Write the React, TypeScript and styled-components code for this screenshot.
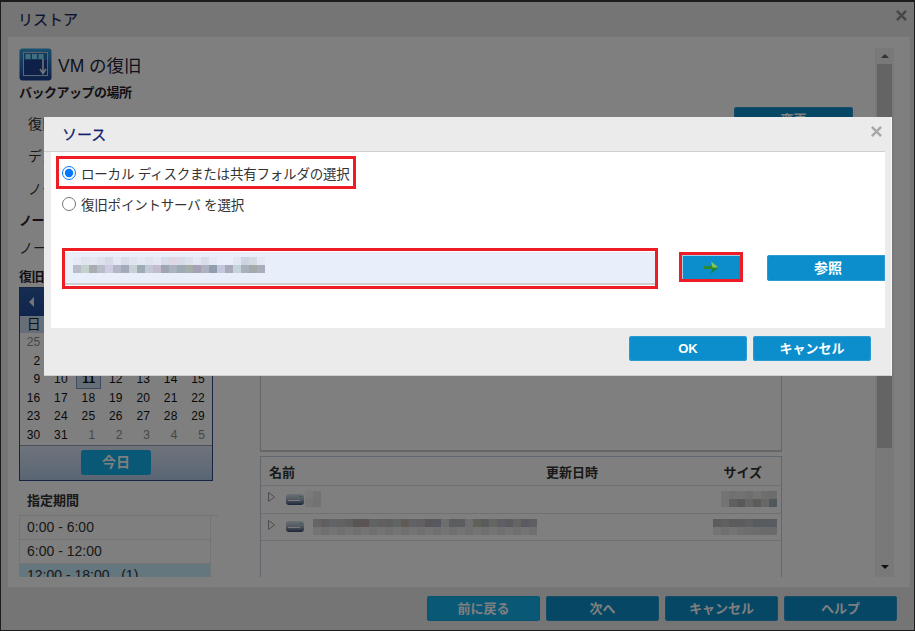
import React from 'react';
import styled, { createGlobalStyle } from 'styled-components';

const GlobalStyle = createGlobalStyle`
  html, body {
    margin: 0;
    padding: 0;
    background: #777;
  }
  * {
    box-sizing: border-box;
  }
`;

const FONT = `"Liberation Sans", "Noto Sans CJK JP", sans-serif`;

const Page = styled.div`
  position: relative;
  width: 915px;
  height: 631px;
  overflow: hidden;
  display: flex;
  flex-direction: column;
  background: #ebebeb;
  border: 1px solid #1c1c1c;
  border-top-width: 2px;
  font-family: ${FONT};
  color: #333;
`;

const WindowHeader = styled.div`
  height: 35px;
  flex: none;
  display: flex;
  align-items: flex-start;
  justify-content: space-between;
  padding: 8px 7px 0 17px;
`;

const WindowTitle = styled.div`
  font-size: 15px;
  line-height: 19px;
  color: #1b2a63;
  -webkit-text-stroke: 0.2px #1b2a63;
`;

const CloseMark = styled.svg<{ $tone: string }>`
  width: 11px;
  height: 11px;
  stroke: ${p => p.$tone};
  stroke-width: 2.8;
  fill: none;
`;

const Panel = styled.div`
  flex: 1;
  min-height: 0;
  margin: 0 4px 0 7px;
  padding: 11px 16px 10px 11px;
  background: #fff;
  display: flex;
`;

const Main = styled.div`
  flex: 1;
  min-width: 0;
  overflow: hidden;
`;

const Scrollbar = styled.div`
  width: 19px;
  flex: none;
  background: #f3f3f3;
  display: flex;
  flex-direction: column;
  align-items: center;
  justify-content: space-between;
  padding: 6px 0 8px;
`;

const ScrollThumb = styled.div`
  width: 15px;
  height: 384px;
  margin-top: 6px;
  margin-bottom: auto;
  background: #c9c9c9;
`;

const ScrollArrow = styled.div<{ $down?: boolean }>`
  width: 0;
  height: 0;
  border-left: 4px solid transparent;
  border-right: 4px solid transparent;
  ${p => (p.$down ? 'border-top: 4px solid #222;' : 'border-bottom: 4px solid #666;')}
`;

const TitleRow = styled.div`
  height: 33px;
  display: flex;
  align-items: center;
  gap: 6px;
  font-size: 17.5px;
  color: #1f1f3a;
`;

const SectionHeading = styled.div<{ $top: number }>`
  margin-top: ${p => p.$top}px;
  height: 17px;
  line-height: 17px;
  font-size: 13px;
  letter-spacing: -0.5px;
  font-weight: bold;
  color: #2a1f2a;
  white-space: nowrap;
`;

const FieldRow = styled.div<{ $height: number; $indent: number; $top?: number }>`
  height: ${p => p.$height}px;
  margin-top: ${p => p.$top ?? 0}px;
  padding-left: ${p => p.$indent}px;
  padding-right: 22px;
  display: flex;
  align-items: center;
  justify-content: space-between;
  font-size: 14px;
`;

const Columns = styled.div`
  margin-top: 2px;
  display: grid;
  grid-template-columns: 194px 522px;
  column-gap: 47px;
  align-items: start;
`;

const Calendar = styled.div`
  height: 194px;
  border: 1px solid #2a4a86;
  display: flex;
  flex-direction: column;
`;

const CalendarHead = styled.div`
  height: 28px;
  flex: none;
  display: flex;
  align-items: center;
  padding-left: 9px;
  background: linear-gradient(#2d5aa5, #1f4a98);
`;

const HeadArrow = styled.div`
  width: 0;
  height: 0;
  border-top: 5px solid transparent;
  border-bottom: 5px solid transparent;
  border-right: 5px solid #e8e8e8;
`;

const Week = styled.div`
  display: grid;
  grid-template-columns: repeat(7, 1fr);
`;

const WeekdayRow = styled(Week)`
  height: 17px;
  background: #ccdcf4;
  font-size: 14px;
  line-height: 16px;
  text-align: center;
  color: #222;
`;

const DayRow = styled(Week)`
  height: 18.6px;
  line-height: 18.6px;
  font-size: 12px;
  letter-spacing: 0.2px;
`;

const Day = styled.div<{ $muted?: boolean; $today?: boolean }>`
  text-align: right;
  padding-right: 7px;
  color: ${p => (p.$muted ? '#8d8d8d' : '#111')};
  ${p =>
    p.$today &&
    `
    margin: 0 1px;
    background: #ccdcf0;
    border: 1px solid #7f9ac4;
    line-height: 16.6px;
    font-weight: bold;
    padding-right: 5px;
  `}
`;

const CalendarFoot = styled.div`
  flex: 1;
  border-top: 1px solid #8fa0bb;
  display: flex;
  align-items: center;
  justify-content: center;
  background: linear-gradient(#dee8f6, #b4cae8);
`;

const TodayButton = styled.div`
  width: 70px;
  height: 25px;
  border-radius: 3px;
  background: #10b0ec;
  color: #fff;
  font-size: 14px;
  font-weight: bold;
  line-height: 25px;
  text-align: center;
`;

const RangeTitle = styled.div`
  margin: 11px 0 6px 8px;
  height: 17px;
  line-height: 17px;
  font-size: 13px;
  font-weight: bold;
  color: #333;
`;

const RangeList = styled.div`
  width: 199px;
  border-top: 1px solid #e6e6e6;
`;

const RangeRow = styled.div<{ $selected?: boolean }>`
  width: 192px;
  height: 24px;
  line-height: 23px;
  padding-left: 7px;
  font-size: 14px;
  white-space: pre;
  border-left: 1px solid #e8e8e8;
  border-right: 1px solid #e8e8e8;
  border-bottom: 1px solid #e8e8e8;
  background: ${p => (p.$selected ? '#c8ecfc' : '#fff')};
`;

const RightColumn = styled.div`
  display: flex;
  flex-direction: column;
  gap: 4px;
`;

const PreviewBox = styled.div`
  height: 165px;
  border: 1px solid #ccc;
  border-bottom-width: 2px;
`;

const FileTable = styled.div`
  height: 121px;
  border: 1px solid #c2cfdc;
  border-bottom: 0;
`;

const FileHead = styled.div`
  height: 29px;
  display: grid;
  grid-template-columns: 277px 1fr auto;
  align-items: center;
  padding: 0 19px 0 8px;
  font-size: 13px;
  font-weight: bold;
  color: #333;
  border-bottom: 1px solid #e3e3e3;
`;

const FileRow = styled.div`
  height: 27.5px;
  display: flex;
  align-items: center;
  padding: 0 4px 0 7px;
  border-bottom: 1px solid #e3e3e3;
`;

const Expander = styled.svg`
  width: 7px;
  height: 10px;
  margin-right: 11px;
  margin-top: -4px;
  fill: #fff;
  stroke: #9a9a9a;
`;

const DriveIcon = styled.svg`
  width: 18px;
  height: 11px;
  flex: none;
  margin-right: 1px;
`;

const Mosaic = styled.div<{ $cell: number }>`
  display: flex;
  flex-direction: column;
  height: ${p => p.$cell * 2}px;
`;

const MosaicLine = styled.div`
  display: flex;
  flex: 1;
`;

const MosaicCell = styled.span<{ $c: string; $w: number }>`
  width: ${p => p.$w}px;
  background: ${p => p.$c};
`;

const NameSlot = styled.div`
  flex: 1;
  display: flex;
`;

const Footer = styled.div`
  height: 43px;
  flex: none;
  display: flex;
  justify-content: flex-end;
  gap: 6px;
  padding: 9px 17px 0 0;
`;

const ActionButton = styled.div<{ $w: number; $h?: number; $soft?: boolean }>`
  width: ${p => p.$w}px;
  height: ${p => p.$h ?? 25}px;
  line-height: ${p => p.$h ?? 25}px;
  flex: none;
  text-align: center;
  font-size: 13px;
  font-weight: bold;
  color: #fff;
  background: ${p => (p.$soft ? '#10b0ec' : '#0b8ecb')};
  border-radius: 3px;
  box-shadow: inset 0 0 0 1px ${p => (p.$soft ? '#14a8e4' : '#2b9bd2')};
`;

const ChangeButton = styled(ActionButton)`
  align-self: flex-start;
`;

const Dim = styled.div`
  position: absolute;
  inset: -2px -1px -1px -1px;
  background: rgba(0, 0, 0, 0.5);
`;

const Modal = styled.div`
  position: absolute;
  left: 43px;
  top: 115px;
  width: 848px;
  height: 259px;
  display: flex;
  flex-direction: column;
  background: #ebebeb;
  border-right: 1px solid #f7f7f7;
  border-bottom: 1px solid #d0d0d0;
`;

const ModalHeader = styled.div`
  height: 35px;
  flex: none;
  display: flex;
  align-items: flex-start;
  justify-content: space-between;
  padding: 9px 3px 0 18px;
  margin: 0 6px 0 0;
  border-bottom: 1px solid #cfcfcf;
`;

const ModalTitle = styled.div`
  font-size: 15px;
  line-height: 18px;
  color: #141f70;
  -webkit-text-stroke: 0.25px #141f70;
`;

const ModalBody = styled.div`
  height: 176px;
  flex: none;
  margin: 0 6px 0 7px;
  padding: 4px 0 0 5px;
  background: #fff;
`;

const RedFrame = styled.div`
  border: 3px solid #ee1c25;
`;

const SourceChoice = styled(RedFrame)`
  width: 300px;
  height: 33px;
  display: flex;
  align-items: center;
  padding-left: 3px;
`;

const Radio = styled.input`
  width: 14px;
  height: 14px;
  margin: 0 5px 0 0;
  flex: none;
`;

const RadioText = styled.span`
  font-size: 13.5px;
  letter-spacing: -0.2px;
  color: #333;
  white-space: nowrap;
`;

const PlainChoice = styled.div`
  height: 22px;
  margin: 4px 0 0 6px;
  display: flex;
  align-items: center;
`;

const PathRow = styled.div`
  margin: 33px 0 0 6px;
  display: flex;
  align-items: flex-start;
`;

const PathFrame = styled(RedFrame)`
  width: 596px;
  height: 41px;
  padding: 0;
  background: #fff;
`;

const PathInput = styled.div`
  height: 33px;
  margin-top: 1px;
  padding: 5px 0 0 8px;
  background: #e8eefa;
  border-bottom: 2px solid #cfcfcf;
`;

const GoFrame = styled(RedFrame)`
  width: 64px;
  height: 30px;
  margin: 4px 0 0 21px;
`;

const GoButton = styled.div`
  height: 100%;
  display: flex;
  align-items: center;
  justify-content: center;
  background: #0b8ecb;
  box-shadow: inset 1px 1px 0 #9ed0ea;
`;

const BrowseButton = styled(ActionButton)`
  margin: 7px 0 0 24px;
  padding-left: 4px;
  font-size: 14px;
  border-radius: 3px 0 0 3px;
`;

const ModalFooter = styled.div`
  flex: 1;
  display: flex;
  justify-content: flex-end;
  gap: 6px;
  padding: 8px 20px 0 0;
`;

const pathTop = [
  '#e6eaf4', '#dfe3ee', '#e2e6f1', '#dde1ec', '#d6dae6', '#e4e8f3', '#d9dde9', '#e0e4ef',
  '#e4e8f3', '#dfe3ee', '#e4e8f3', '#d8dce8', '#dfd8e4', '#d8dce8', '#dde1ec', '#e4e8f3',
  '#d9dde9', '#e4e8f3', '#e8eefa', '#e8eefa', '#e2e6f1', '#ccd6e0', '#d4dae2', '#e4e8f3',
];
const pathBottom = [
  '#b9bdc9', '#c4d1ce', '#a9adb0', '#b9bdc9', '#cfcbe0', '#b4b7c6', '#a5a9bc', '#c6d2d6',
  '#a0acb4', '#c3c8d8', '#c4bccd', '#a0a5b5', '#aab4bf', '#9daab4', '#a5aea8', '#a79fb8',
  '#abb3c0', '#919eae', '#c2c8dc', '#a9abb8', '#c4d4dc', '#a9b2bc', '#a3aaa9', '#a9acbb',
];
const longTop = [
  '#ffffff', '#ccc8c8', '#c0bcbc', '#c0c8cc', '#c4c4c4', '#bcc0c0', '#b4a8a8', '#b8a8a8',
  '#c4c8c6', '#c0c0bc', '#bcbcc0', '#c0c8c6', '#c0b8a8', '#c0c4cc', '#c4c0c4', '#b0acb0',
  '#acb2c0', '#dcdcdc', '#b4bcc0', '#b4bcc0', '#dedede', '#c0c4b4', '#b4b8b8', '#c8ccc4',
  '#c0bcc8', '#b8b8c0', '#c8ccc8', '#b4b4c0', '#c0bcc8',
];
const longBottom = longTop.map((_, i) => (i === 0 ? '#ffffff' : i % 2 ? '#e8e8e8' : '#e0e0e0'));
const sizeOneTop = ['#e8e8e8', '#e0e0e0', '#e4e4e4', '#dcdcdc', '#e8e8e8', '#dcdcdc', '#d8d8d8'];
const sizeOneBottom = ['#e8e8e8', '#c0c0c0', '#b0b4b4', '#c8cccc', '#b8b8b0', '#d0d0d0', '#a0b0b8'];
const sizeTwoTop = ['#b8b8b8', '#c0c0c0', '#b4b8b8', '#b8b8c0', '#bcc0c0', '#a8b8c0', '#b0b8c0', '#b0b8c0'];
const sizeTwoBottom = ['#e8e8e8', '#e0e0e0', '#e8e8e8', '#e0e0e0', '#dcdcdc', '#d8d8d8', '#d0d4d8', '#d0d4d8'];

const calendarRows = [
  [25, 26, 27, 28, 29, 30, 1],
  [2, 3, 4, 5, 6, 7, 8],
  [9, 10, 11, 12, 13, 14, 15],
  [16, 17, 18, 19, 20, 21, 22],
  [23, 24, 25, 26, 27, 28, 29],
  [30, 31, 1, 2, 3, 4, 5],
];

const isMuted = (row: number, col: number) => (row === 0 && col < 6) || (row === 5 && col > 1);

const Pixels = ({ top, bottom, cell }: { top: string[]; bottom: string[]; cell: number }) => (
  <Mosaic $cell={cell}>
    <MosaicLine>
      {top.map((c, i) => (
        <MosaicCell key={i} $c={c} $w={cell} />
      ))}
    </MosaicLine>
    <MosaicLine>
      {bottom.map((c, i) => (
        <MosaicCell key={i} $c={c} $w={cell} />
      ))}
    </MosaicLine>
  </Mosaic>
);

const Cross = ({ tone }: { tone: string }) => (
  <CloseMark $tone={tone} viewBox="0 0 12 12">
    <path d="M1 1l10 10M11 1L1 11" />
  </CloseMark>
);

const RestoreIcon = () => (
  <svg width="33" height="33" viewBox="0 0 33 33">
    <defs>
      <linearGradient id="vmBody" x1="0" y1="0" x2="0" y2="1">
        <stop offset="0" stopColor="#35a0dc" />
        <stop offset="1" stopColor="#1a3f94" />
      </linearGradient>
    </defs>
    <rect x="0.5" y="0.5" width="32" height="32" rx="3" fill="url(#vmBody)" />
    <rect x="4.5" y="4.5" width="24" height="23" fill="#1f4090" stroke="#b4cfe2" />
    <rect x="5" y="5" width="23" height="7" fill="#2a70b0" />
    <rect x="6.5" y="6" width="5" height="5" fill="#7ee0ff" />
    <rect x="13" y="6" width="5" height="5" fill="#7ee0ff" />
    <rect x="19.5" y="6" width="5" height="5" fill="#7ee0ff" />
    <path d="M24 11v14M21 21l3 4.5 3-4.5" stroke="#dce8f2" strokeWidth="1.6" fill="none" />
  </svg>
);

const Drive = () => (
  <DriveIcon viewBox="0 0 18 11">
    <defs>
      <linearGradient id="driveBody" x1="0" y1="0" x2="0" y2="1">
        <stop offset="0" stopColor="#d8e2ec" />
        <stop offset="0.5" stopColor="#a4b2c4" />
        <stop offset="1" stopColor="#3a4c72" />
      </linearGradient>
    </defs>
    <rect x="0" y="0" width="18" height="11" rx="3" fill="url(#driveBody)" />
    <rect x="2" y="6" width="12" height="1" fill="#f0f4f8" />
    <rect x="13" y="2" width="3" height="1" fill="#58e070" />
  </DriveIcon>
);

const GoArrow = () => (
  <svg width="15" height="13" viewBox="0 0 15 13">
    <path d="M0 5h8.5L7 0.5 14.5 6.5 7 12.5 8.5 8H0z" fill="#2f8a2e" />
    <path d="M7 0.5l7.5 6H8.5z" fill="#86c45e" />
    <path d="M8.5 8L7 12.5l7.5-6z" fill="#1c7f45" />
  </svg>
);

const FileEntry = ({ name, size }: { name: React.ReactNode; size: React.ReactNode }) => (
  <FileRow>
    <Expander viewBox="0 0 7 10">
      <path d="M.5.5l6 4.5-6 4.5z" />
    </Expander>
    <Drive />
    <NameSlot>{name}</NameSlot>
    {size}
  </FileRow>
);

const App: React.FC = () => {
  return (
    <>
      <GlobalStyle />
      <Page>
        <WindowHeader>
          <WindowTitle>リストア</WindowTitle>
          <Cross tone="#8e8e8e" />
        </WindowHeader>
        <Panel>
          <Main>
            <TitleRow>
              <RestoreIcon />
              VM の復旧
            </TitleRow>
            <SectionHeading $top={3}>バックアップの場所</SectionHeading>
            <FieldRow $height={32} $indent={9} $top={6}>
              復旧ポイント サーバ
              <ChangeButton $w={119}>変更</ChangeButton>
            </FieldRow>
            <FieldRow $height={32} $indent={9}>
              デスティネーション
            </FieldRow>
            <FieldRow $height={33} $indent={9}>
              ノード
            </FieldRow>
            <SectionHeading $top={8}>ノード</SectionHeading>
            <FieldRow $height={22} $indent={0} $top={7}>
              ノード名
            </FieldRow>
            <SectionHeading $top={10}>復旧ポイントの日付</SectionHeading>
            <Columns>
              <div>
                <Calendar>
                  <CalendarHead>
                    <HeadArrow />
                  </CalendarHead>
                  <WeekdayRow>
                    {['日', '月', '火', '水', '木', '金', '土'].map(d => (
                      <div key={d}>{d}</div>
                    ))}
                  </WeekdayRow>
                  {calendarRows.map((row, r) => (
                    <DayRow key={r}>
                      {row.map((d, c) => (
                        <Day key={c} $muted={isMuted(r, c)} $today={r === 2 && c === 2}>
                          {d}
                        </Day>
                      ))}
                    </DayRow>
                  ))}
                  <CalendarFoot>
                    <TodayButton>今日</TodayButton>
                  </CalendarFoot>
                </Calendar>
                <RangeTitle>指定期間</RangeTitle>
                <RangeList>
                  <RangeRow>0:00 - 6:00</RangeRow>
                  <RangeRow>6:00 - 12:00</RangeRow>
                  <RangeRow $selected>12:00 - 18:00   (1)</RangeRow>
                </RangeList>
              </div>
              <RightColumn>
                <PreviewBox />
                <FileTable>
                  <FileHead>
                    <span>名前</span>
                    <span>更新日時</span>
                    <span>サイズ</span>
                  </FileHead>
                  <FileEntry
                    name={<Pixels cell={8} top={['#f4f4f4', '#e8e8e8']} bottom={['#ededed', '#e4e4e4']} />}
                    size={<Pixels cell={8} top={sizeOneTop} bottom={sizeOneBottom} />}
                  />
                  <FileEntry
                    name={<Pixels cell={8} top={longTop} bottom={longBottom} />}
                    size={<Pixels cell={8} top={sizeTwoTop} bottom={sizeTwoBottom} />}
                  />
                </FileTable>
              </RightColumn>
            </Columns>
          </Main>
          <Scrollbar>
            <ScrollArrow />
            <ScrollThumb />
            <ScrollArrow $down />
          </Scrollbar>
        </Panel>
        <Footer>
          <ActionButton $w={113} $soft>
            前に戻る
          </ActionButton>
          <ActionButton $w={113}>次へ</ActionButton>
          <ActionButton $w={113}>キャンセル</ActionButton>
          <ActionButton $w={113}>ヘルプ</ActionButton>
        </Footer>
        <Dim />
        <Modal>
          <ModalHeader>
            <ModalTitle>ソース</ModalTitle>
            <Cross tone="#a8a8a8" />
          </ModalHeader>
          <ModalBody>
            <SourceChoice>
              <Radio type="radio" name="source" defaultChecked />
              <RadioText>ローカル ディスクまたは共有フォルダの選択</RadioText>
            </SourceChoice>
            <PlainChoice>
              <Radio type="radio" name="source" />
              <RadioText>復旧ポイントサーバ を選択</RadioText>
            </PlainChoice>
            <PathRow>
              <PathFrame>
                <PathInput>
                  <Pixels cell={8} top={pathTop} bottom={pathBottom} />
                </PathInput>
              </PathFrame>
              <GoFrame>
                <GoButton>
                  <GoArrow />
                </GoButton>
              </GoFrame>
              <BrowseButton $w={118} $h={26}>
                参照
              </BrowseButton>
            </PathRow>
          </ModalBody>
          <ModalFooter>
            <ActionButton $w={118}>OK</ActionButton>
            <ActionButton $w={118}>キャンセル</ActionButton>
          </ModalFooter>
        </Modal>
      </Page>
    </>
  );
};

export default App;
